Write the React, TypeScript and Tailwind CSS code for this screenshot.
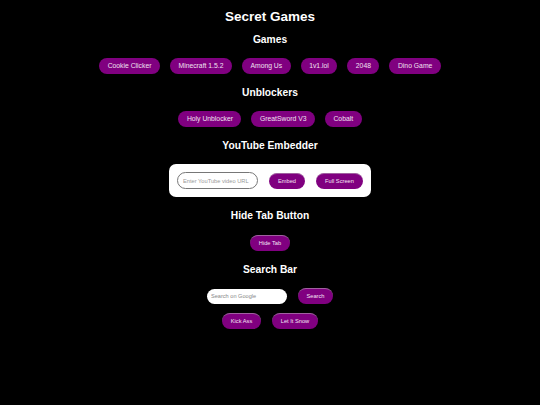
const games = ["Cookie Clicker", "Minecraft 1.5.2", "Among Us", "1v1.lol", "2048", "Dino Game"];
const unblockers = ["Holy Unblocker", "GreatSword V3", "Cobalt"];

const font = "font-['Liberation_Sans',Arial,sans-serif]";

function LinkPill({ label }: { label: string }) {
  return (
    <a className="h-4 px-[8.5px] flex items-center rounded-full bg-[#800080] text-[6.8px] text-[#f0e0f0] whitespace-nowrap">
      {label}
    </a>
  );
}

function Btn({ label, w }: { label: string; w: string }) {
  return (
    <button className={`${w} h-4 flex items-center justify-center rounded-full bg-[#800080] border-t border-[#a060a0] text-[5.7px] text-[#f4e4f4] whitespace-nowrap`}>
      {label}
    </button>
  );
}

function Heading({ children, className }: { children: string; className: string }) {
  return <h2 className={`${className} h-4 flex items-center justify-center text-[10.25px] font-bold text-white`}>{children}</h2>;
}

export default function App() {
  return (
    <main className={`${font} w-[540px] h-[405px] bg-black overflow-hidden flex flex-col items-center pt-[8px]`}>
      <h1 className="h-[18px] flex items-center text-[13.5px] font-bold text-white">Secret Games</h1>

      <Heading className="mt-[6px]">Games</Heading>
      <div className="mt-[10px] flex gap-[10px]">
        {games.map((g) => (
          <LinkPill key={g} label={g} />
        ))}
      </div>

      <Heading className="mt-[11px]">Unblockers</Heading>
      <div className="mt-[10px] flex gap-[10px]">
        {unblockers.map((u) => (
          <LinkPill key={u} label={u} />
        ))}
      </div>

      <Heading className="mt-[11px]">YouTube Embedder</Heading>
      <div className="mt-[10px] w-[202px] h-[33px] bg-white rounded-[7px] flex items-center pl-2 pr-2">
        <input
          readOnly
          placeholder="Enter YouTube video URL"
          className="w-[81px] h-[17px] px-[5px] rounded-full bg-white border border-[#777] text-[5.7px] outline-none placeholder:text-[#999]"
        />
        <div className="ml-[11px]">
          <Btn label="Embed" w="w-9" />
        </div>
        <div className="ml-[11px]">
          <Btn label="Full Screen" w="w-[47px]" />
        </div>
      </div>

      <Heading className="mt-[11px]">Hide Tab Button</Heading>
      <div className="mt-[11px]">
        <Btn label="Hide Tab" w="w-10" />
      </div>

      <Heading className="mt-[11px]">Search Bar</Heading>
      <div className="mt-[10px] flex items-center gap-[11px]">
        <input
          readOnly
          placeholder="Search on Google"
          className="w-[80px] h-[15px] px-[4px] rounded-full bg-white text-[5.6px] outline-none placeholder:text-[#888]"
        />
        <Btn label="Search" w="w-[35px]" />
      </div>
      <div className="mt-[9px] flex gap-[11px]">
        <Btn label="Kick Ass" w="w-[39px]" />
        <Btn label="Let It Snow" w="w-[46px]" />
      </div>
    </main>
  );
}
